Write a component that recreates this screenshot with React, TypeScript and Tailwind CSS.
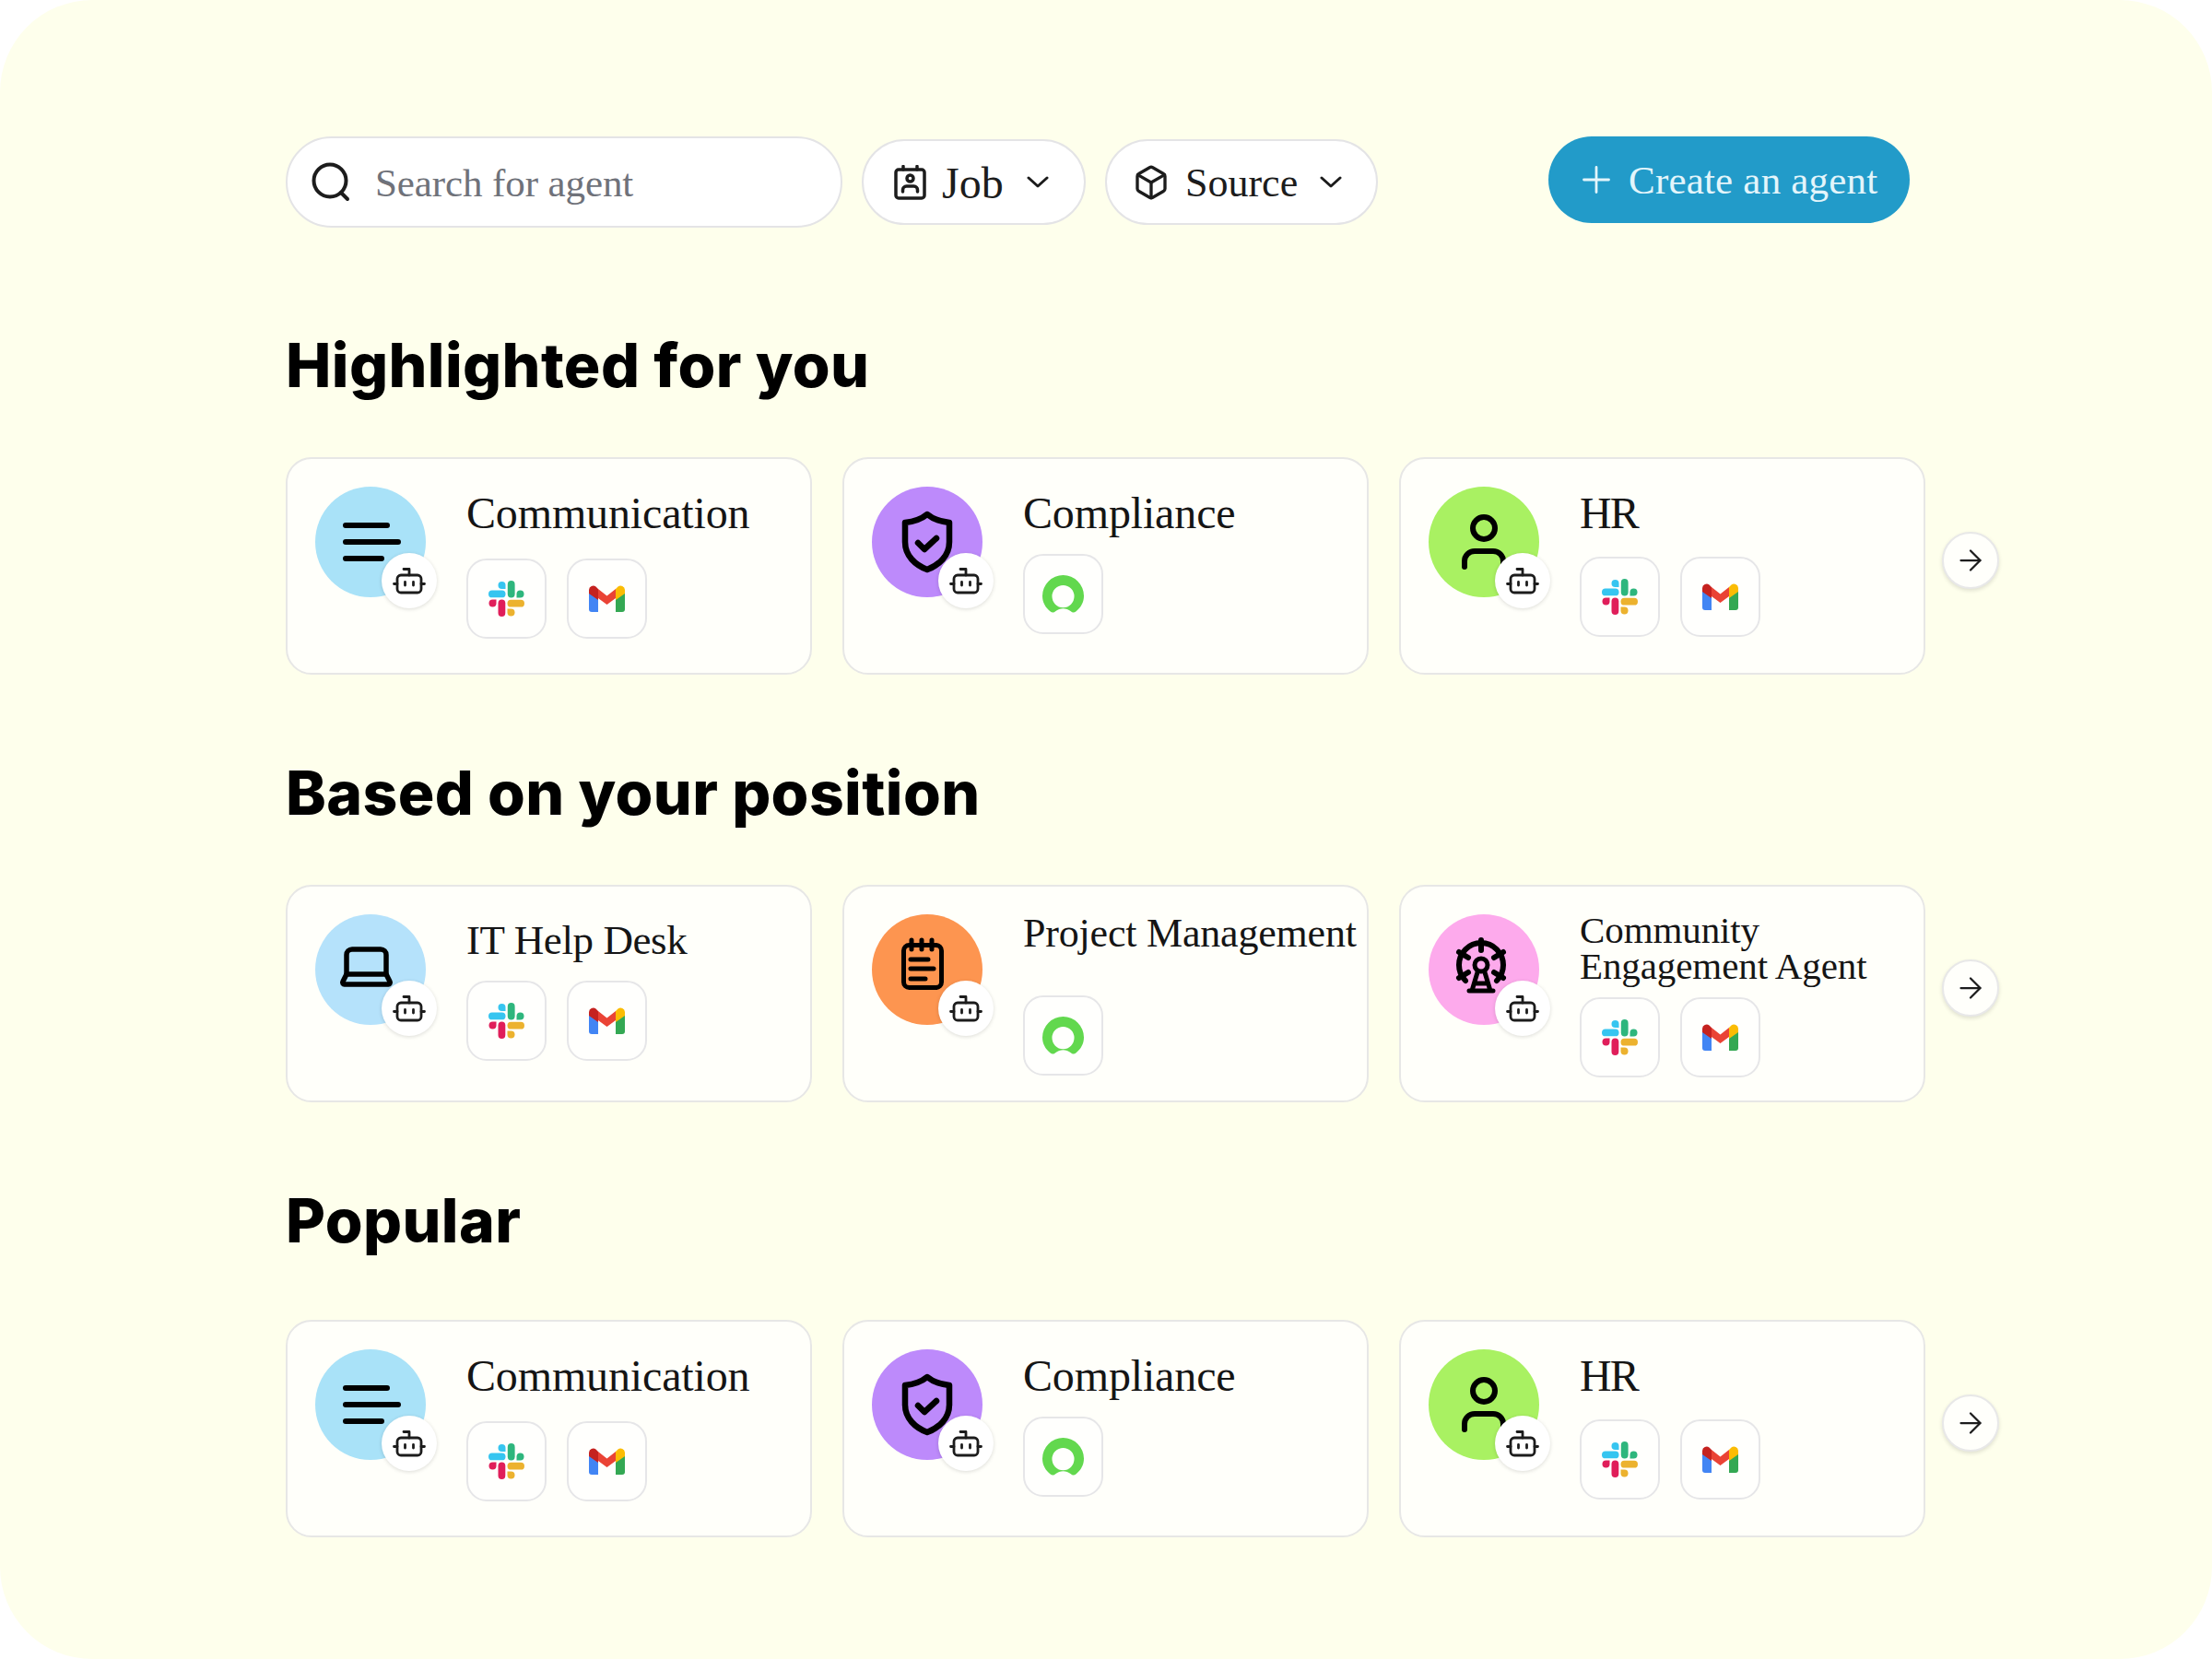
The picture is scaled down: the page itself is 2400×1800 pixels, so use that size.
import React from 'react';
import { ArrowRight, Box } from 'lucide-react';

const serif = '[font-family:"Liberation_Serif",serif]';

const Robot = () => (
  <svg width="40" height="40" viewBox="0 0 40 40" fill="none" stroke="#1c1c1c" strokeWidth="2.8" strokeLinecap="round" strokeLinejoin="round">
    <rect x="7" y="14" width="26" height="19" rx="4" />
    <path d="M14 7.5h6V14M3.5 23.5H7M33 23.5h3.5M15.5 21.5v3.5M24.5 21.5v3.5" />
  </svg>
);

const Lines = () => (
  <svg width="120" height="120" viewBox="0 0 120 120" fill="none" stroke="#000" strokeWidth="6" strokeLinecap="round">
    <path d="M33 42h45M33 60h57M33 78h39" />
  </svg>
);

const Shield = () => (
  <svg width="120" height="120" viewBox="0 0 120 120" fill="none" stroke="#000" strokeWidth="6.5" strokeLinecap="round" strokeLinejoin="round">
    <path d="M60 30c6 5 15 8 24 9v21c0 15-11 25-24 30-13-5-24-15-24-30V39c9-1 18-4 24-9z" />
    <path d="M50 61l7 7 13-12" />
  </svg>
);

const Person = () => (
  <svg width="120" height="120" viewBox="0 0 120 120" fill="none" stroke="#000" strokeWidth="6" strokeLinecap="round">
    <circle cx="60" cy="45" r="12" />
    <path d="M39 87v-6a11 11 0 0 1 11-11h20a11 11 0 0 1 11 11v6" />
  </svg>
);

const Laptop = () => (
  <svg width="120" height="120" viewBox="0 0 120 120" fill="none" stroke="#000" strokeWidth="5.5" strokeLinecap="round" strokeLinejoin="round">
    <path d="M34 65V44a6 6 0 0 1 6-6h31a6 6 0 0 1 6 6v21" />
    <path d="M34 65h43l4 8a2 2 0 0 1-2 3H32a2 2 0 0 1-2-3z" />
  </svg>
);

const Notepad = () => (
  <svg width="120" height="120" viewBox="0 0 120 120" fill="none" stroke="#000" strokeWidth="5" strokeLinecap="round" strokeLinejoin="round">
    <rect x="34.5" y="33.5" width="41" height="46" rx="6" />
    <path d="M43 28v10M54 28v10M65 28v10M42 49h19M42 59h25M42 70h16" />
  </svg>
);

const Wheel = () => (
  <svg width="120" height="120" viewBox="0 0 120 120" fill="none" stroke="#000" strokeWidth="6" strokeLinecap="round" strokeLinejoin="round">
    <path d="M40 72a24 24 0 1 1 34 0" />
    <circle cx="57" cy="55" r="7" strokeWidth="5" />
    <path d="M57 28v11M33 41l10 6M81 41l-10 6M33 69l10-6M81 69l-10-6" />
    <path d="M53 63l-6 20M61 63l6 20M44 83h26M50 75h14" strokeWidth="5" />
  </svg>
);

const Slack = () => (
  <svg width="39" height="39" viewBox="0 0 39 39">
    <path d="M14.5 1a4 4 0 0 0 0 8h4V5a4 4 0 0 0-4-4z" fill="#36C5F0" />
    <rect x="0" y="10.5" width="18.500" height="7.800" rx="3.900" fill="#36C5F0" />
    <path d="M38.500 14.500a4 4 0 0 0-8 0v4h4a4 4 0 0 0 4-4z" fill="#2EB67D" />
    <rect x="20.800" y="0" width="7.800" height="18.500" rx="3.900" fill="#2EB67D" />
    <path d="M.5 24.500a4 4 0 0 0 8 0v-4h-4a4 4 0 0 0-4 4z" fill="#E01E5A" />
    <rect x="10.500" y="20.500" width="7.800" height="18.500" rx="3.900" fill="#E01E5A" />
    <path d="M24.500 38.500a4 4 0 0 0 0-8h-4v4a4 4 0 0 0 4 4z" fill="#ECB22E" />
    <rect x="20.500" y="20.800" width="18.500" height="7.800" rx="3.900" fill="#ECB22E" />
  </svg>
);

const Gmail = () => (
  <svg width="39" height="29" viewBox="0 0 39 29">
    <path d="M0 8v18a3 3 0 0 0 3 3h7V13z" fill="#4285F4" />
    <path d="M39 8v18a3 3 0 0 1-3 3h-7V13z" fill="#34A853" />
    <path d="M10 4l9.500 7.500L29 4v10l-9.500 7L10 14z" fill="#EA4335" />
    <path d="M10 4L7.500 1.500A4.700 4.700 0 0 0 0 5v4l10 7z" fill="#C5221F" />
    <path d="M29 4l2.500-2.500A4.700 4.700 0 0 1 39 5v4L29 16z" fill="#FBBC04" />
  </svg>
);

const Ring = () => (
  <svg width="45" height="41" viewBox="0 0 43 39">
    <path
      fillRule="evenodd"
      fill="#62D84E"
      d="M8 37.500C3 33.500 0 28 0 21.500a21.500 21.500 0 0 1 43 0c0 6.500-3 12-8 16-2 1.500-4 1.500-5.500 0-2.500-2-5-3-8-3s-5.500 1-8 3c-1.500 1.500-3.500 1.500-5.500 0zM21.500 10.500a11.500 11.500 0 1 0 0 23 11.500 11.500 0 0 0 0-23z"
    />
  </svg>
);

const Tile = ({ children }: { children: React.ReactNode }) => (
  <div className="flex h-[87px] w-[87px] items-center justify-center rounded-[22px] border-[2.5px] border-[#e6e6e8] bg-[#fffffd]">
    {children}
  </div>
);

type CardData = {
  title: string;
  icon: React.ReactNode;
  bg: string;
  titleClass: string;
  logosClass: string;
  logos: 'both' | 'ring';
};

const Card = ({ card }: { card: CardData }) => (
  <div className="flex h-[236px] w-[571px] shrink-0 rounded-[28px] border-2 border-[#e7e7e6] bg-[#fffffa] pl-[30px] pt-[30px]">
    <div className={`relative flex h-[120px] w-[120px] shrink-0 items-center justify-center rounded-full ${card.bg}`}>
      {card.icon}
      <div className="absolute left-[72px] top-[72px] flex h-[60px] w-[60px] items-center justify-center rounded-full bg-white shadow-[0_1px_4px_rgba(0,0,0,0.14)]">
        <Robot />
      </div>
    </div>
    <div className="ml-[44px] min-w-0">
      <div className={`${serif} whitespace-pre-line text-[#151515] ${card.titleClass}`}>{card.title}</div>
      <div className={`flex gap-[22px] ${card.logosClass}`}>
        {card.logos === 'both' ? (
          <>
            <Tile><Slack /></Tile>
            <Tile><Gmail /></Tile>
          </>
        ) : (
          <Tile><Ring /></Tile>
        )}
      </div>
    </div>
  </div>
);

const large = 'text-[48px] leading-[39px] tracking-[-0.15px]';
const big = 'text-[45px] leading-[39px] tracking-[-0.4px]';
const mid = 'text-[44px] leading-[39px] tracking-[-0.2px]';
const small = 'text-[41px] leading-[39px] tracking-[-0.1px]';

const highlighted: CardData[] = [
  { title: 'Communication', icon: <Lines />, bg: 'bg-[#a9e2f8]', titleClass: `${large} mt-[9px]`, logosClass: 'mt-[30px]', logos: 'both' },
  { title: 'Compliance', icon: <Shield />, bg: 'bg-[#bd8afb]', titleClass: `${large} mt-[9px]`, logosClass: 'mt-[25px]', logos: 'ring' },
  { title: 'HR', icon: <Person />, bg: 'bg-[#a9f162]', titleClass: `text-[48px] leading-[39px] tracking-[-2px] mt-[9px]`, logosClass: 'mt-[28px]', logos: 'both' },
];

const position: CardData[] = [
  { title: 'IT Help Desk', icon: <Laptop />, bg: 'bg-[#b5e2fb]', titleClass: `${big} mt-[9px]`, logosClass: 'mt-[24px]', logos: 'both' },
  { title: 'Project Management', icon: <Notepad />, bg: 'bg-[#fd9550]', titleClass: `${mid} mt-[1px] whitespace-nowrap`, logosClass: 'mt-[48px]', logos: 'ring' },
  { title: 'Community\nEngagement Agent', icon: <Wheel />, bg: 'bg-[#fdaaec]', titleClass: `${small} -mt-[2px]`, logosClass: 'mt-[14px]', logos: 'both' },
];

const popular: CardData[] = [
  { ...highlighted[0], logosClass: 'mt-[30px]' },
  highlighted[1],
  highlighted[2],
];

const Section = ({ title, cards, gapClass }: { title: string; cards: CardData[]; gapClass: string }) => (
  <section>
    <h2 className={`[font-family:Inter,sans-serif] text-[66px] font-extrabold leading-[80px] tracking-[0.4px] text-black ${gapClass}`}>{title}</h2>
    <div className="flex items-center gap-[33px]">
      {cards.map(card => (
        <Card key={card.title} card={card} />
      ))}
      <button className="-ml-[15px] mb-[12px] flex h-[62px] w-[62px] shrink-0 items-center justify-center rounded-full border-2 border-[#e8e8e8] bg-[#fffffb] shadow-[0_2px_4px_rgba(0,0,0,0.12)]">
        <ArrowRight size={36} strokeWidth={1.5} color="#1c1c1c" />
      </button>
    </div>
  </section>
);

const Chevron = () => (
  <svg width="24" height="13" viewBox="0 0 24 13" fill="none" stroke="#1c1c1c" strokeWidth="3" strokeLinecap="round" strokeLinejoin="round">
    <path d="M2 2l10 9 10-9" />
  </svg>
);

export default function App() {
  return (
    <div className="h-[1800px] w-[2400px] overflow-hidden bg-white">
      <div className="h-full rounded-[100px] bg-[#feffec] pl-[310px] pt-[148px]">
        <div className="flex items-center">
          <div className="flex h-[99px] w-[604px] items-center rounded-full border-2 border-[#e4e4e6] bg-white pl-[25px]">
            <svg width="44" height="44" viewBox="0 0 44 44" fill="none" stroke="#1c1c1c" strokeWidth="4" strokeLinecap="round">
              <circle cx="21" cy="20" r="17.500" />
              <path d="M33 33l7 7" />
            </svg>
            <span className={`${serif} ml-[26px] pt-[3px] text-[43px] tracking-[-0.1px] text-[#6f727a]`}>Search for agent</span>
          </div>

          <div className="ml-[21px] flex h-[93px] w-[243px] items-center rounded-full border-2 border-[#e4e4e6] bg-white pl-[33px]">
            <svg width="35" height="38" viewBox="0 0 35 38" fill="none" stroke="#1c1c1c" strokeWidth="3.500" strokeLinecap="round" strokeLinejoin="round">
              <rect x="2" y="5" width="31" height="31" rx="3" />
              <path d="M10 1.500V5M25 1.500V5M9.500 29v-2a4 4 0 0 1 4-4h8a4 4 0 0 1 4 4v2" />
              <circle cx="17.500" cy="14.500" r="3.500" />
            </svg>
            <span className={`${serif} ml-[17px] pt-[2px] text-[48px] text-[#1c1c1c]`}>Job</span>
            <span className="ml-[25px]"><Chevron /></span>
          </div>

          <div className="ml-[21px] flex h-[93px] w-[296px] items-center rounded-full border-2 border-[#e4e4e6] bg-white pl-[28px]">
            <Box size={40} strokeWidth={2} color="#1c1c1c" />
            <span className={`${serif} ml-[17px] pt-[2px] text-[44px] text-[#1c1c1c]`}>Source</span>
            <span className="ml-[24px]"><Chevron /></span>
          </div>

          <button className="mb-[5px] ml-[185px] flex h-[94px] w-[392px] items-center rounded-full bg-[#229bc9] pl-[37px]">
            <svg width="30" height="30" viewBox="0 0 30 30" fill="none" stroke="#e3f5fb" strokeWidth="2.800" strokeLinecap="round">
              <path d="M15 1.500v27M1.500 15h27" />
            </svg>
            <span className={`${serif} ml-[20px] pt-[2px] text-[43px] tracking-[0.2px] text-[#e3f5fb]`}>Create an agent</span>
          </button>
        </div>

        <div className="mt-[109px]">
          <Section title="Highlighted for you" cards={highlighted} gapClass="mb-[60px]" />
        </div>
        <div className="mt-[88px]">
          <Section title="Based on your position" cards={position} gapClass="mb-[60px]" />
        </div>
        <div className="mt-[88px]">
          <Section title="Popular" cards={popular} gapClass="mb-[68px]" />
        </div>
      </div>
    </div>
  );
}
